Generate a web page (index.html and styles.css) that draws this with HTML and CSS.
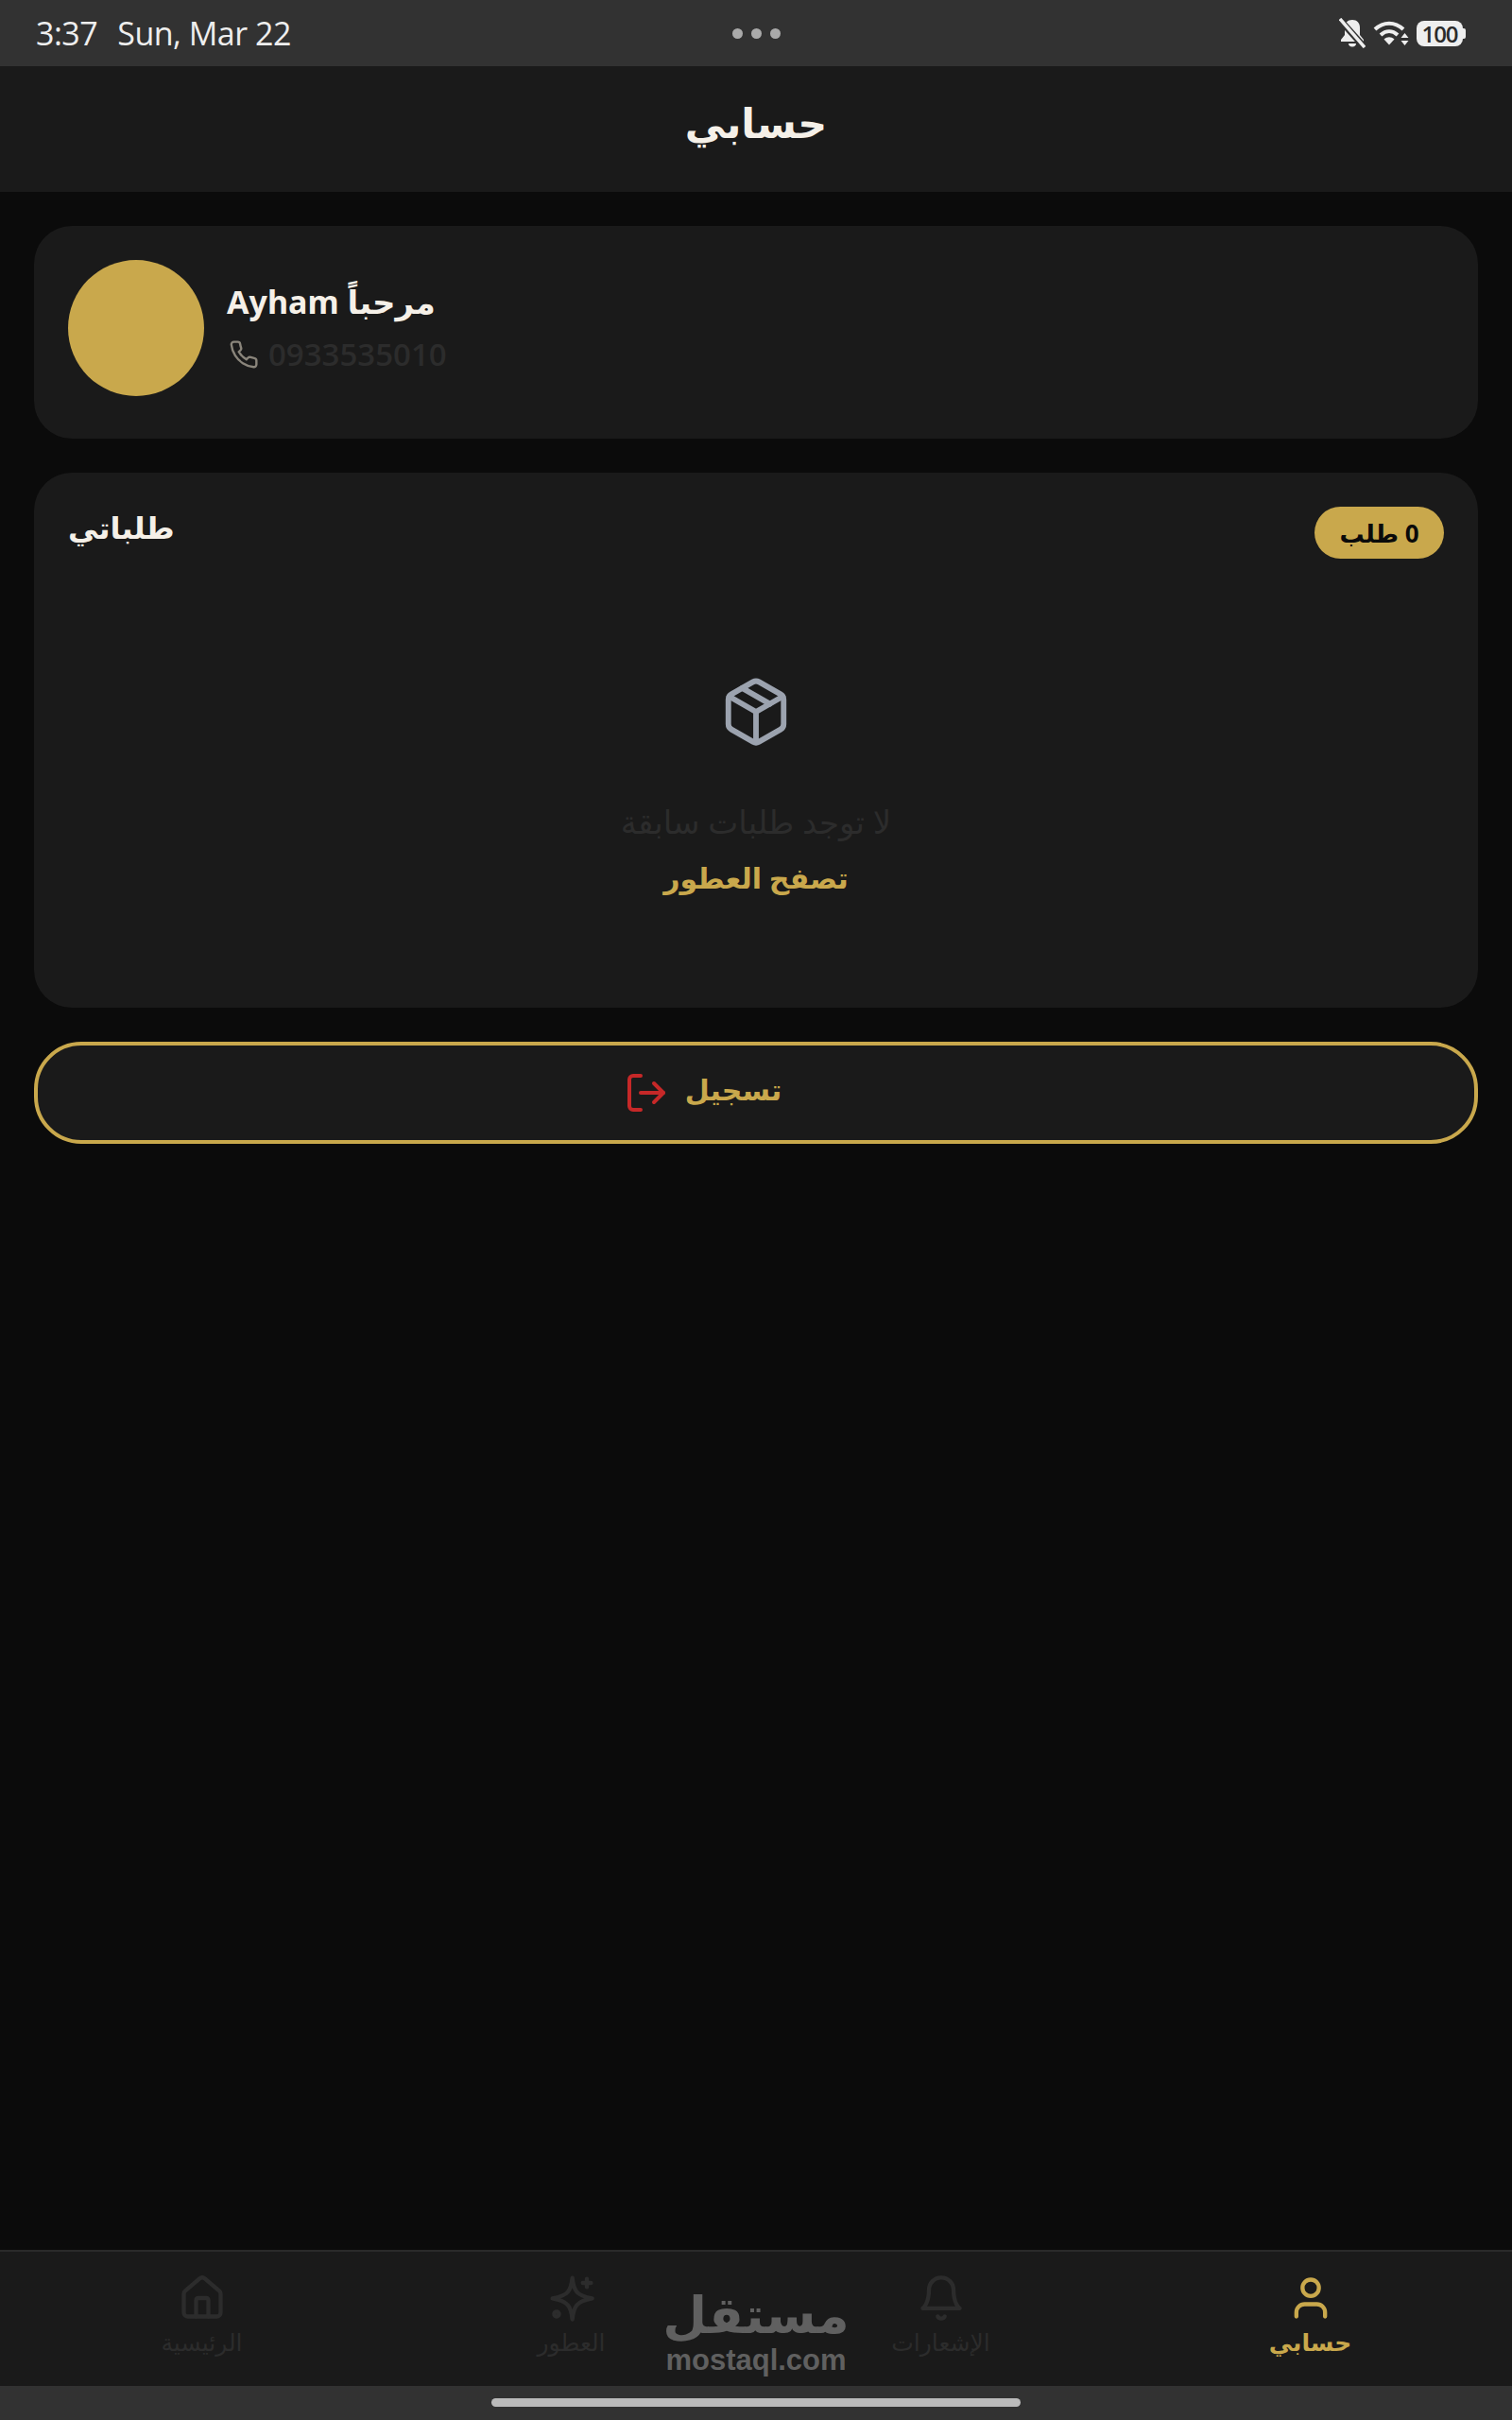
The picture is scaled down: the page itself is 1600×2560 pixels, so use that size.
FILE: index.html
```html
<!DOCTYPE html>
<html lang="ar">
<head>
    <meta charset="UTF-8">
    <meta name="viewport" content="width=device-width, initial-scale=1.0">
    <title>حسابي</title>
    <link rel="stylesheet" href="styles.css">
</head>
<body>

    <!-- system status bar -->
    <div class="status-bar">
      <div class="status-time" dir="ltr"><span>3:37</span><span>Sun, Mar 22</span></div>
      <div class="status-dots"><i></i><i></i><i></i></div>
      <div class="status-icons">
        <svg class="icon-muted" viewBox="0 0 28 32">
          <path fill="#eee" d="M14 2c-5 0-8 3.500-8 8v8l-4 5v2h24v-2l-4-5v-8c0-4.500-3-8-8-8z"/>
          <path fill="#eee" d="M10 27h8c0 2-1.500 3.500-4 3.500s-4-1.500-4-3.500z"/>
          <path fill="none" stroke="#333" stroke-width="7" d="M0 1l27 30"/>
          <path fill="none" stroke="#eee" stroke-width="3.500" d="M1 1l26 30"/>
        </svg>
        <svg class="icon-wifi" viewBox="0 0 38 26">
          <path fill="none" stroke="#eee" stroke-width="4" d="M2 9c9-8.500 21-8.500 30 0"/>
          <path fill="none" stroke="#eee" stroke-width="4" d="M8 15c5.500-5 12.500-5 18 0"/>
          <path fill="#eee" d="M11.500 19.500c3.500-3 7.500-3 11 0l-5.500 6z"/>
          <path fill="#eee" d="M33.500 13l4 5h-8zM33.500 26l4-5h-8z"/>
        </svg>
        <div class="battery"><span>100</span></div>
      </div>
    </div>

    <header class="top-bar">
      <h1>حسابي</h1>
    </header>

    <main class="content">

      <section class="card profile-card">
        <div class="avatar"></div>
        <div class="profile-info">
          <div class="profile-name" dir="rtl">مرحباً Ayham</div>
          <div class="profile-phone">
            <svg viewBox="0 0 24 24" class="phone-icon"><path d="M22 16.920v3a2 2 0 0 1-2.180 2 19.790 19.790 0 0 1-8.630-3.070 19.500 19.500 0 0 1-6-6 19.790 19.790 0 0 1-3.070-8.670A2 2 0 0 1 4.110 2h3a2 2 0 0 1 2 1.720c.127.960.361 1.903.7 2.810a2 2 0 0 1-.45 2.110L8.090 9.910a16 16 0 0 0 6 6l1.270-1.270a2 2 0 0 1 2.110-.45c.907.339 1.850.573 2.810.7A2 2 0 0 1 22 16.920z"/></svg>
            <span>0933535010</span>
          </div>
        </div>
      </section>

      <section class="card orders-card">
        <div class="orders-head">
          <h2>طلباتي</h2>
          <span class="orders-count" dir="rtl">0 طلب</span>
        </div>
        <div class="orders-empty">
          <svg viewBox="0 0 24 24" class="box-icon">
            <path d="M11 21.730a2 2 0 0 0 2 0l7-4A2 2 0 0 0 21 16V8a2 2 0 0 0-1-1.730l-7-4a2 2 0 0 0-2 0l-7 4A2 2 0 0 0 3 8v8a2 2 0 0 0 1 1.730z"/>
            <path d="M12 22V12"/>
            <path d="M3.290 7 12 12l8.710-5"/>
            <path d="m7.500 4.270 9 5.150"/>
          </svg>
          <p class="empty-text">لا توجد طلبات سابقة</p>
          <a class="browse-link" href="#">تصفح العطور</a>
        </div>
      </section>

      <button class="logout-button">
        <svg viewBox="0 0 24 24" class="logout-icon">
          <path d="M9 21H5a2 2 0 0 1-2-2V5a2 2 0 0 1 2-2h4"/>
          <path d="m16 17 5-5-5-5"/>
          <path d="M21 12H9"/>
        </svg>
        <span>تسجيل</span>
      </button>

    </main>

    <nav class="bottom-nav">
      <a class="nav-item" href="#">
        <svg viewBox="0 0 24 24">
          <path d="M15 21v-8a1 1 0 0 0-1-1h-4a1 1 0 0 0-1 1v8"/>
          <path d="M3 10a2 2 0 0 1 .709-1.528l7-6a2 2 0 0 1 2.582 0l7 6A2 2 0 0 1 21 10v9a2 2 0 0 1-2 2H5a2 2 0 0 1-2-2z"/>
        </svg>
        <span>الرئيسية</span>
      </a>
      <a class="nav-item" href="#">
        <svg viewBox="0 0 24 24">
          <path d="M12.300 2.200C13 8.500 14.300 10.800 22 12.200C14.300 13.600 13 16 12.300 22.400C11.600 16 10.300 13.600 2.600 12.200C10.300 10.800 11.600 8.500 12.300 2.200z"/>
          <path d="M19.400 2.600v4"/>
          <path d="M21.400 4.600h-4"/>
          <circle cx="4.600" cy="19.800" r="1.200"/>
        </svg>
        <span>العطور</span>
      </a>
      <a class="nav-item" href="#">
        <svg viewBox="0 0 24 24">
          <path d="M6 8a6 6 0 0 1 12 0c0 7 3 9 3 9H3s3-2 3-9"/>
          <path d="M10.300 21a1.940 1.940 0 0 0 3.400 0"/>
        </svg>
        <span>الإشعارات</span>
      </a>
      <a class="nav-item active" href="#">
        <svg viewBox="0 0 24 24">
          <path d="M19 21v-2a4 4 0 0 0-4-4H9a4 4 0 0 0-4 4v2"/>
          <circle cx="12" cy="7" r="4"/>
        </svg>
        <span>حسابي</span>
      </a>

      <!-- watermark sits on top of the nav -->
      <div class="watermark">
        <div class="watermark-ar">مستقل</div>
        <div class="watermark-en">mostaql.com</div>
      </div>
    </nav>

    <div class="home-bar"><i></i></div>

</body>
</html>
```

FILE: styles.css
```css
html, body {
  height: 100%;
}

body {
  font-family: "Noto Sans", "DejaVu Sans", sans-serif;
  background-color: #0b0b0b;
  color: #f5f0e8;
  margin: 0;
  display: flex;
  flex-direction: column;
  overflow: hidden;
}

svg {
  display: block;
}

/* status bar */
.status-bar {
  height: 70px;
  background-color: #323232;
  display: flex;
  align-items: center;
  justify-content: space-between;
  padding: 0 49px 0 38px;
  position: relative;
}

.status-time {
  display: flex;
  gap: 21px;
  font-family: "Open Sans", sans-serif;
  font-size: 34px;
  color: #eeeeee;
  letter-spacing: -0.5px;
}

.status-dots {
  position: absolute;
  top: 30px;
  left: 775px;
  display: flex;
  gap: 9px;
}

.status-dots i {
  width: 11px;
  height: 11px;
  border-radius: 50%;
  background-color: #aaaaaa;
}

.status-icons {
  display: flex;
  align-items: center;
  gap: 8px;
}

.icon-muted {
  width: 28px;
  height: 32px;
}

.icon-wifi {
  width: 38px;
  height: 26px;
}

.battery {
  width: 49px;
  height: 27px;
  background-color: #eeeeee;
  border-radius: 8px;
  display: flex;
  align-items: center;
  justify-content: center;
  position: relative;
  margin-right: 3px;
}

.battery::after {
  content: "";
  position: absolute;
  right: -3px;
  top: 8px;
  width: 3px;
  height: 11px;
  background-color: #eeeeee;
  border-radius: 0 2px 2px 0;
}

.battery span {
  font-family: "Open Sans", sans-serif;
  font-size: 24px;
  font-weight: 600;
  color: #2a2a2a;
  letter-spacing: -1px;
}

/* header */
.top-bar {
  height: 133px;
  box-sizing: border-box;
  padding-bottom: 15px;
  background-color: #1a1a1a;
  display: flex;
  align-items: center;
  justify-content: center;
}

.top-bar h1 {
  margin: 0;
  font-size: 43px;
  font-weight: bold;
  color: #f5f0e8;
}

/* main content */
.content {
  flex: 1;
  padding: 36px;
  display: flex;
  flex-direction: column;
  gap: 36px;
}

.card {
  background-color: #1a1a1a;
  border-radius: 40px;
}

.profile-card {
  display: flex;
  align-items: flex-start;
  gap: 24px;
  padding: 36px 36px 45px;
}

.avatar {
  width: 144px;
  height: 144px;
  border-radius: 50%;
  background-color: #c9a84c;
}

.profile-info {
  display: flex;
  flex-direction: column;
  gap: 9px;
  padding-top: 20px;
}

.profile-name {
  align-self: flex-start;
  font-size: 34px;
  font-weight: bold;
  line-height: 48px;
}

.profile-phone {
  display: flex;
  align-items: center;
  gap: 10px;
  padding-left: 2px;
  font-family: "Open Sans", sans-serif;
  font-size: 33px;
  font-weight: 600;
  line-height: 46px;
  color: #2c2c2c;
}

.phone-icon {
  width: 32px;
  height: 32px;
  fill: none;
  stroke: #8a857b;
  stroke-width: 1.8;
}

.orders-card {
  height: 566px;
  padding: 36px;
  box-sizing: border-box;
}

.orders-head {
  display: flex;
  align-items: flex-start;
  justify-content: space-between;
}

.orders-head h2 {
  margin: 0;
  font-size: 32px;
  line-height: 44px;
  font-weight: bold;
  color: #f5f0e8;
}

.orders-count {
  width: 137px;
  height: 55px;
  background-color: #c9a84c;
  border-radius: 28px;
  display: flex;
  align-items: center;
  justify-content: center;
  font-size: 26px;
  font-weight: bold;
  color: #0a0a0a;
}

.orders-empty {
  display: flex;
  flex-direction: column;
  align-items: center;
  padding-top: 123px;
}

.box-icon {
  width: 78px;
  height: 78px;
  fill: none;
  stroke: #9ca3af;
  stroke-width: 1.8;
  stroke-linejoin: round;
  stroke-linecap: round;
}

.empty-text {
  margin: 52px 0 0;
  font-size: 34px;
  line-height: 50px;
  color: #2c2c2c;
}

.browse-link {
  margin-top: 10px;
  font-size: 30px;
  font-weight: bold;
  line-height: 50px;
  color: #c9a84c;
  text-decoration: none;
}

.logout-button {
  height: 108px;
  background-color: #1a1a1a;
  border: 4px solid #c9a84c;
  border-radius: 50px;
  display: flex;
  align-items: center;
  justify-content: center;
  gap: 17px;
  padding: 0 113px 8px 0;
  font-family: inherit;
  font-size: 30px;
  font-weight: bold;
  color: #c9a84c;
}

.logout-icon {
  width: 48px;
  height: 48px;
  margin-top: 8px;
  fill: none;
  stroke: #c62828;
  stroke-width: 2;
  stroke-linecap: round;
  stroke-linejoin: round;
}

/* bottom nav */
.bottom-nav {
  height: 142px;
  background-color: #1a1a1a;
  border-top: 2px solid #2a2a2a;
  padding: 0 18px;
  display: grid;
  grid-template-columns: repeat(4, 1fr);
  position: relative;
}

.nav-item {
  display: flex;
  flex-direction: column;
  align-items: center;
  padding-top: 23px;
  color: #2c2c2c;
  text-decoration: none;
  font-size: 25px;
  line-height: 36px;
}

.nav-item svg {
  width: 52px;
  height: 52px;
  margin-bottom: 2px;
  fill: none;
  stroke: currentColor;
  stroke-width: 2;
  stroke-linecap: round;
  stroke-linejoin: round;
}

.nav-item.active {
  color: #c9a84c;
  font-weight: bold;
}

.watermark {
  position: absolute;
  left: 650px;
  top: 33px;
  width: 300px;
  text-align: center;
  color: #606060;
  font-weight: bold;
}

.watermark-ar {
  font-size: 54px;
  line-height: 64px;
}

.watermark-en {
  font-family: "Liberation Sans", sans-serif;
  font-size: 31px;
  line-height: 35px;
}

.home-bar {
  height: 36px;
  background-color: #323232;
  display: flex;
  justify-content: center;
  padding-top: 13px;
  box-sizing: border-box;
}

.home-bar i {
  width: 560px;
  height: 9px;
  border-radius: 5px;
  background-color: #bbbbbb;
}
```
